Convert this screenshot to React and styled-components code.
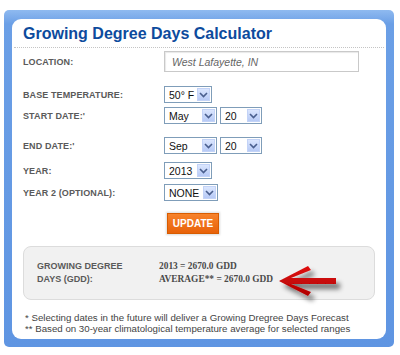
import React from 'react';
import styled, { createGlobalStyle } from 'styled-components';

const GlobalStyle = createGlobalStyle`
  html, body {
    margin: 0;
    padding: 0;
    background: #ffffff;
    font-family: 'Liberation Sans', Arial, sans-serif;
  }
`;

const Frame = styled.div`
  margin: 10px 0 0 4px;
  width: 390px;
  height: 337px;
  box-sizing: border-box;
  padding: 9px 8px 8px 8px;
  border-radius: 5px;
  background: linear-gradient(to bottom, #8fbaf0 0px, #6b9fe6 14px, #5f95e2 100%);
`;

const Panel = styled.div`
  height: 100%;
  box-sizing: border-box;
  background: #ffffff;
  border-radius: 9px;
  padding: 5px 0 0 0;
`;

const Title = styled.h1`
  margin: 0;
  padding-left: 11px;
  font-size: 16px;
  line-height: 20px;
  font-weight: bold;
  color: #0d4b9d;
`;

const Divider = styled.div`
  margin: 3px 2px 0 2px;
  border-top: 1px dotted #c4c4c4;
`;

const Form = styled.div`
  padding: 0 11px;
`;

const Row = styled.div`
  display: flex;
  align-items: center;
  margin-top: ${(p) => p.$top}px;
`;

const Label = styled.div`
  width: 141px;
  flex-shrink: 0;
  font-size: 9px;
  font-weight: bold;
  color: #5a5a5a;
  letter-spacing: 0.1px;
`;

const Controls = styled.div`
  display: flex;
  gap: 3px;
`;

const TextInput = styled.div`
  width: 195px;
  height: 21px;
  box-sizing: border-box;
  border: 1px solid #c9c9c9;
  box-shadow: inset 1px 1px 1px #e8e8e8;
  padding-left: 7px;
  display: flex;
  align-items: center;
  font-size: 10.5px;
  font-style: italic;
  color: #666;
`;

const SelectBox = styled.div`
  width: ${(p) => p.$w}px;
  height: 17px;
  box-sizing: border-box;
  border: 1px solid #7f9db9;
  background: #fff;
  display: flex;
  align-items: center;
  justify-content: space-between;
  padding: 0 1px 0 4px;
  font-size: 10.5px;
  color: #111;
`;

const DropButton = styled.div`
  width: 13px;
  height: 13px;
  box-sizing: border-box;
  border: 1px solid #c3d3f7;
  background: linear-gradient(to bottom, #dbe6fe, #b7caf6);
  display: flex;
  align-items: center;
  justify-content: center;
`;

const UpdateButton = styled.button`
  margin-left: 3px;
  width: 52px;
  height: 21px;
  border: 1px solid #d85c00;
  background: linear-gradient(to bottom, #f7822a, #e8620a);
  color: #fff;
  font-family: 'Liberation Sans', Arial, sans-serif;
  font-size: 10px;
  font-weight: bold;
  padding: 0;
  box-shadow: 0 0 2px 1px rgba(0, 0, 0, 0.15);
`;

const Results = styled.div`
  position: relative;
  margin: 12px 11px 0 11px;
  height: 54px;
  box-sizing: border-box;
  border: 1px solid #dcdcdc;
  border-radius: 8px;
  background: #f1f1f1;
  padding: 0 13px;
  display: flex;
  align-items: center;
`;

const ResultLabel = styled.div`
  width: 122px;
  font-size: 9px;
  font-weight: bold;
  color: #5a5a5a;
  line-height: 13px;
`;

const ResultValues = styled.div`
  font-family: 'Liberation Serif', 'Times New Roman', serif;
  font-size: 9.4px;
  font-weight: bold;
  color: #4a4a4a;
  line-height: 13px;
`;

const Arrow = styled.svg`
  position: absolute;
  left: 254px;
  top: 18px;
`;

const Notes = styled.div`
  margin: 12px 0 0 13px;
  font-size: 9.7px;
  line-height: 11px;
  color: #444;
`;

const Chevron = () => (
  <svg width="9" height="6" viewBox="0 0 9 6">
    <path d="M1 1 L4.5 4.5 L8 1" fill="none" stroke="#4a5f8e" strokeWidth="1.6" />
  </svg>
);

const Select = ({ w, children }) => (
  <SelectBox $w={w}>
    <span>{children}</span>
    <DropButton>
      <Chevron />
    </DropButton>
  </SelectBox>
);

const App = () => (
  <>
    <GlobalStyle />
    <Frame>
      <Panel>
        <Title>Growing Degree Days Calculator</Title>
        <Divider />
        <Form>
          <Row $top={3}>
            <Label>LOCATION:</Label>
            <TextInput>West Lafayette, IN</TextInput>
          </Row>
          <Row $top={14}>
            <Label>BASE TEMPERATURE:</Label>
            <Select w={48}>50° F</Select>
          </Row>
          <Row $top={4}>
            <Label>START DATE:'</Label>
            <Controls>
              <Select w={53}>May</Select>
              <Select w={42}>20</Select>
            </Controls>
          </Row>
          <Row $top={13}>
            <Label>END DATE:'</Label>
            <Controls>
              <Select w={53}>Sep</Select>
              <Select w={42}>20</Select>
            </Controls>
          </Row>
          <Row $top={8}>
            <Label>YEAR:</Label>
            <Select w={48}>2013</Select>
          </Row>
          <Row $top={5}>
            <Label>YEAR 2 (OPTIONAL):</Label>
            <Select w={54}>NONE</Select>
          </Row>
          <Row $top={12}>
            <Label />
            <UpdateButton>UPDATE</UpdateButton>
          </Row>
        </Form>
        <Results>
          <ResultLabel>
            GROWING DEGREE
            <br />
            DAYS (GDD):
          </ResultLabel>
          <ResultValues>
            2013 = 2670.0 GDD
            <br />
            AVERAGE** = 2670.0 GDD
          </ResultValues>
          <Arrow width="72" height="42" viewBox="0 0 72 42">
            <defs>
              <linearGradient id="arrowRed" x1="0" y1="0" x2="0" y2="1">
                <stop offset="0" stopColor="#e01010" />
                <stop offset="1" stopColor="#b00000" />
              </linearGradient>
              <filter id="arrowShadow" x="-20%" y="-20%" width="150%" height="160%">
                <feGaussianBlur in="SourceAlpha" stdDeviation="2.5" />
                <feOffset dx="4" dy="5" result="blur" />
                <feComponentTransfer>
                  <feFuncA type="linear" slope="0.55" />
                </feComponentTransfer>
                <feMerge>
                  <feMergeNode />
                  <feMergeNode in="SourceGraphic" />
                </feMerge>
              </filter>
            </defs>
            <g filter="url(#arrowShadow)">
              <path
                d="M30 1 L33 5 L13 13 L58 13 L58 19 L13 19 L33 27 L30 31 L1 16 Z"
                fill="url(#arrowRed)"
              />
            </g>
          </Arrow>
        </Results>
        <Notes>
          * Selecting dates in the future will deliver a Growing Dregree Days Forecast
          <br />
          ** Based on 30-year climatological temperature average for selected ranges
        </Notes>
      </Panel>
    </Frame>
  </>
);

export default App;
